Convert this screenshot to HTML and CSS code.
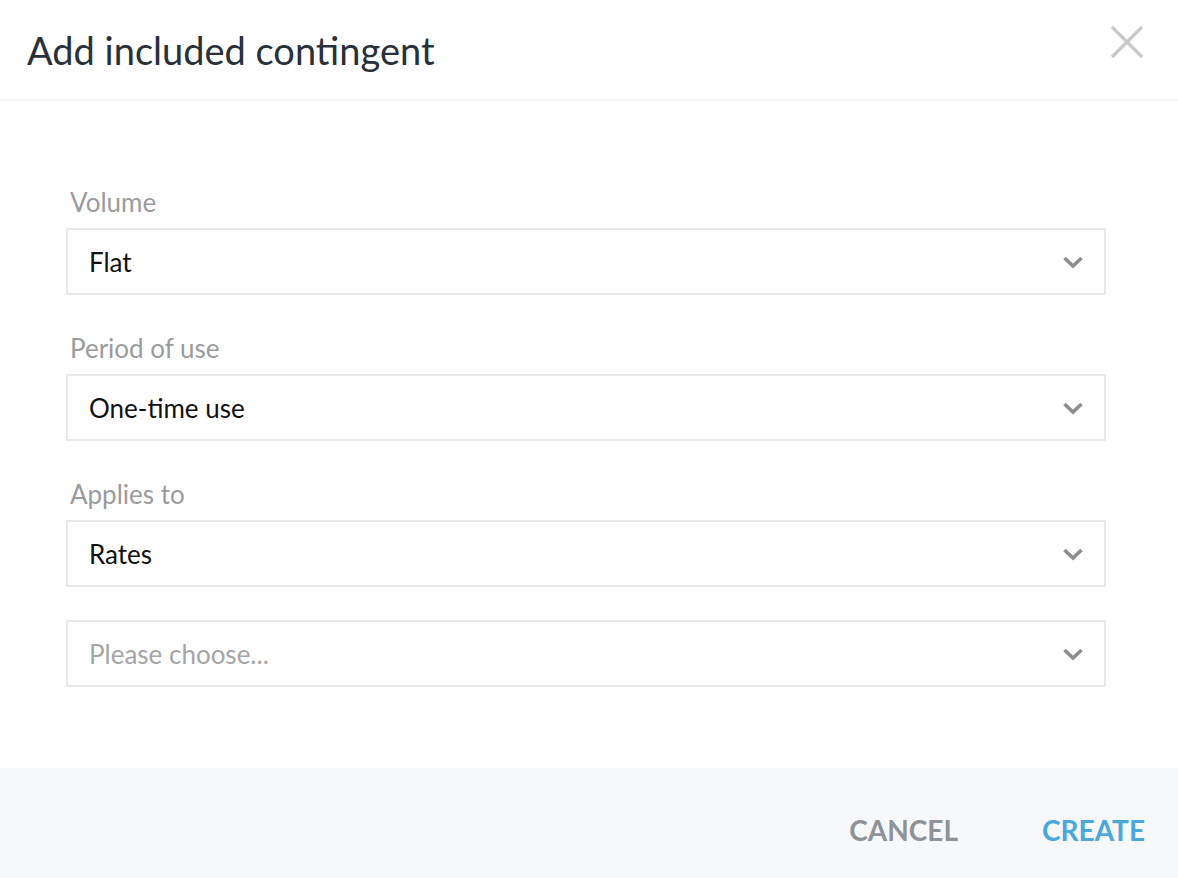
FILE: index.html
```html
<!DOCTYPE html>
<html lang="en">
<head>
<meta charset="utf-8">
<title>Add included contingent</title>
<link rel="stylesheet" href="styles.css">
</head>
<body>
<div class="modal">
  <header class="modal-header">
    <h1 class="modal-title">Add included contingent</h1>
    <button class="close-btn" aria-label="Close">
      <svg width="34" height="34" viewBox="0 0 34 34"><path d="M2 2 L32 32 M32 2 L2 32" stroke="#c9c9c9" stroke-width="3.2" fill="none"/></svg>
    </button>
  </header>
  <main class="modal-body">
    <div class="field">
      <label class="field-label">Volume</label>
      <div class="select"><span class="select-value">Flat</span><svg class="chevron" width="22" height="14" viewBox="0 0 22 14"><path d="M2.5 3 L11 11 L19.5 3" stroke="#8d8d8d" stroke-width="3.6" fill="none"/></svg></div>
    </div>
    <div class="field">
      <label class="field-label">Period of use</label>
      <div class="select"><span class="select-value">One-time use</span><svg class="chevron" width="22" height="14" viewBox="0 0 22 14"><path d="M2.5 3 L11 11 L19.5 3" stroke="#8d8d8d" stroke-width="3.6" fill="none"/></svg></div>
    </div>
    <div class="field">
      <label class="field-label">Applies to</label>
      <div class="select"><span class="select-value">Rates</span><svg class="chevron" width="22" height="14" viewBox="0 0 22 14"><path d="M2.5 3 L11 11 L19.5 3" stroke="#8d8d8d" stroke-width="3.6" fill="none"/></svg></div>
    </div>
    <div class="field field-nolabel">
      <div class="select"><span class="select-value placeholder">Please choose...</span><svg class="chevron" width="22" height="14" viewBox="0 0 22 14"><path d="M2.5 3 L11 11 L19.5 3" stroke="#8d8d8d" stroke-width="3.6" fill="none"/></svg></div>
    </div>
  </main>
  <footer class="modal-footer">
    <button class="btn btn-cancel">CANCEL</button>
    <button class="btn btn-create">CREATE</button>
  </footer>
</div>
</body>
</html>
```
FILE: styles.css
```css
html, body {
  margin: 0;
  padding: 0;
  background: #ffffff;
}
body {
  font-family: "Lato", "Open Sans", sans-serif;
  width: 1178px;
  height: 878px;
  overflow: hidden;
}
.modal {
  display: flex;
  flex-direction: column;
  height: 878px;
}
.modal-header {
  height: 101px;
  border-bottom: 2px solid #f1f2f3;
  display: flex;
  align-items: center;
  justify-content: space-between;
  padding: 0 34px 0 27px;
  box-sizing: border-box;
  flex: none;
}
.modal-title {
  margin: 0;
  font-size: 38px;
  font-weight: 400;
  color: #28303a;
}
.close-btn {
  background: none;
  border: 0;
  padding: 0;
  width: 34px;
  height: 34px;
  align-self: flex-start;
  margin-top: 25px;
  cursor: pointer;
}
.modal-body {
  flex: 1;
  padding: 48px 72px 0 66px;
}
.field {
  display: flex;
  flex-direction: column;
}
.field-label {
  margin-top: 37px;
  margin-bottom: 10px;
  padding-left: 4px;
  font-size: 26px;
  line-height: 32px;
  color: #9a9b9d;
}
.field-nolabel {
  margin-top: 33px;
}
.select {
  height: 67px;
  box-sizing: border-box;
  border: 2px solid #e8e8e8;
  display: flex;
  align-items: center;
  justify-content: space-between;
  padding: 0 20px 0 21px;
}
.select-value {
  font-size: 26px;
  color: #111111;
}
.select-value.placeholder {
  color: #a5a5a5;
}
.chevron {
  display: block;
}
.modal-footer {
  height: 110px;
  flex: none;
  background: #f7f8fa;
  display: flex;
  justify-content: flex-end;
  align-items: flex-start;
  gap: 84px;
  padding: 46px 33px 0 0;
  box-sizing: border-box;
}
.btn {
  background: none;
  border: 0;
  padding: 0;
  font-family: "Lato", "Open Sans", sans-serif;
  font-size: 28px;
  font-weight: 700;
  line-height: 32px;
  cursor: pointer;
}
.btn-cancel {
  color: #8f9297;
}
.btn-create {
  color: #4aa8dc;
}
```
